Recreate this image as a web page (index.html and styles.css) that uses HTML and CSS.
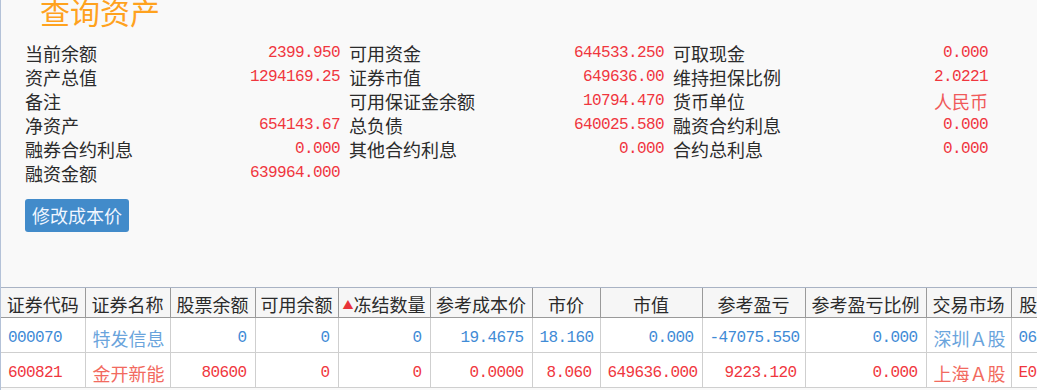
FILE: index.html
```html
<!DOCTYPE html>
<html lang="zh-CN">
<head>
<meta charset="utf-8">
<title>查询资产</title>
<link rel="stylesheet" href="styles.css">
</head>
<body>
<div class="page">
  <section class="summary">
    <h1 class="title">查询资产</h1>
    <div class="info-grid">
      <div class="item"><span class="label">当前余额</span><span class="val num">2399.950</span></div>
      <div class="item"><span class="label">可用资金</span><span class="val num">644533.250</span></div>
      <div class="item"><span class="label">可取现金</span><span class="val num">0.000</span></div>

      <div class="item"><span class="label">资产总值</span><span class="val num">1294169.25</span></div>
      <div class="item"><span class="label">证券市值</span><span class="val num">649636.00</span></div>
      <div class="item"><span class="label">维持担保比例</span><span class="val num">2.0221</span></div>

      <div class="item"><span class="label">备注</span><span class="val num"></span></div>
      <div class="item"><span class="label">可用保证金余额</span><span class="val num">10794.470</span></div>
      <div class="item"><span class="label">货币单位</span><span class="val cjk">人民币</span></div>

      <div class="item"><span class="label">净资产</span><span class="val num">654143.67</span></div>
      <div class="item"><span class="label">总负债</span><span class="val num">640025.580</span></div>
      <div class="item"><span class="label">融资合约利息</span><span class="val num">0.000</span></div>

      <div class="item"><span class="label">融券合约利息</span><span class="val num">0.000</span></div>
      <div class="item"><span class="label">其他合约利息</span><span class="val num">0.000</span></div>
      <div class="item"><span class="label">合约总利息</span><span class="val num">0.000</span></div>

      <div class="item"><span class="label">融资金额</span><span class="val num">639964.000</span></div>
    </div>
    <button class="btn" type="button">修改成本价</button>
  </section>

  <div class="table-wrap">
    <table class="grid">
      <colgroup>
        <col class="c84"><col class="c85"><col class="c85"><col class="c83"><col class="c92"><col class="c102"><col class="c68"><col class="c102"><col class="c103"><col class="c121"><col class="c85"><col class="c88">
      </colgroup>
      <thead>
        <tr>
          <th>证券代码</th>
          <th>证券名称</th>
          <th>股票余额</th>
          <th>可用余额</th>
          <th><span class="sort">▲</span>冻结数量</th>
          <th>参考成本价</th>
          <th>市价</th>
          <th>市值</th>
          <th>参考盈亏</th>
          <th>参考盈亏比例</th>
          <th>交易市场</th>
          <th>股东代码</th>
        </tr>
      </thead>
      <tbody>
        <tr class="up">
          <td class="num left">000070</td>
          <td class="cjk left">特发信息</td>
          <td class="num">0</td>
          <td class="num">0</td>
          <td class="num">0</td>
          <td class="num">19.4675</td>
          <td class="num">18.160</td>
          <td class="num">0.000</td>
          <td class="num">-47075.550</td>
          <td class="num">0.000</td>
          <td class="cjk left">深圳Ａ股</td>
          <td class="num left">0606123456</td>
        </tr>
        <tr class="down">
          <td class="num left">600821</td>
          <td class="cjk left">金开新能</td>
          <td class="num">80600</td>
          <td class="num">0</td>
          <td class="num">0</td>
          <td class="num">0.0000</td>
          <td class="num">8.060</td>
          <td class="num">649636.000</td>
          <td class="num">9223.120</td>
          <td class="num">0.000</td>
          <td class="cjk left">上海Ａ股</td>
          <td class="num left">E071234567</td>
        </tr>
      </tbody>
    </table>
  </div>
</div>
</body>
</html>
```

FILE: styles.css
```css
* { box-sizing: border-box; }

html, body {
  margin: 0;
  padding: 0;
  background: #f9f9f9;
  overflow: hidden;
}

body {
  font-family: "Noto Sans CJK SC", "Noto Sans", sans-serif;
  color: #2b2b2b;
  font-size: 18px;
}

.page {
  width: 1037px;
  height: 390px;
  border-left: 1px solid #b4c2d8;
  overflow: hidden;
}

.summary {
  padding: 0 0 0 24px;
  height: 291px;
}

.title {
  margin: -4px 0 15px 15px;
  font-size: 30px;
  line-height: 30px;
  font-weight: 400;
  color: #ffa21e;
}

.info-grid {
  display: grid;
  grid-template-columns: repeat(3, 315px);
  column-gap: 9px;
  grid-auto-rows: 24px;
}

.item {
  display: flex;
  justify-content: space-between;
  align-items: center;
  line-height: 24px;
}

.label {
  color: #2b2b2b;
  font-size: 18px;
}

.val {
  color: #f0363e;
}

.num {
  font-family: "Liberation Mono", "Noto Sans CJK SC", monospace;
  font-size: 16px;
  letter-spacing: -0.6px;
}

.val.cjk {
  color: #f05a5a;
  font-size: 18px;
}

.btn {
  margin-top: 14px;
  height: 33px;
  padding: 0 7px;
  border: none;
  border-radius: 3px;
  background: #428bca;
  color: #f0f6ff;
  font-family: "Noto Sans CJK SC", sans-serif;
  font-size: 18px;
  line-height: 33px;
}

.table-wrap {
  width: 1036px;
  overflow: hidden;
}

.grid {
  border-collapse: collapse;
  table-layout: fixed;
  width: 1098px;
}

.c84 { width: 84px; }
.c85 { width: 85px; }
.c83 { width: 83px; }
.c92 { width: 92px; }
.c102 { width: 102px; }
.c68 { width: 68px; }
.c103 { width: 103px; }
.c121 { width: 121px; }
.c88 { width: 88px; }

.grid th {
  height: 30px;
  padding: 3px 0 0;
  background: #f6f6f6;
  border-top: 1px solid #a9b3c4;
  border-bottom: 1px solid #9a9a9a;
  border-left: 1px solid #9a9a9a;
  font-weight: 400;
  font-size: 18px;
  line-height: 24px;
  color: #2b2b2b;
  text-align: center;
  white-space: nowrap;
  overflow: hidden;
}

.grid th:first-child { border-left: none; }

.sort {
  color: #e8333a;
  font-size: 11px;
  vertical-align: 3px;
}

.grid td {
  height: 35px;
  padding: 5px 8px 0 7px;
  background: #ffffff;
  border-left: 1px solid #cfcfcf;
  border-bottom: 1px solid #cfcfcf;
  text-align: right;
  white-space: nowrap;
  overflow: hidden;
}

.grid td:first-child { border-left: none; }

.grid td.left { text-align: left; }

.grid td.cjk {
  font-size: 18px;
}

.grid tr.up td { color: #3f8bd6; }
.grid tr.up td.cjk { color: #6aa4dc; }
.grid tr.down td { color: #f0363e; }
.grid tr.down td.cjk { color: #f26a60; }
```
